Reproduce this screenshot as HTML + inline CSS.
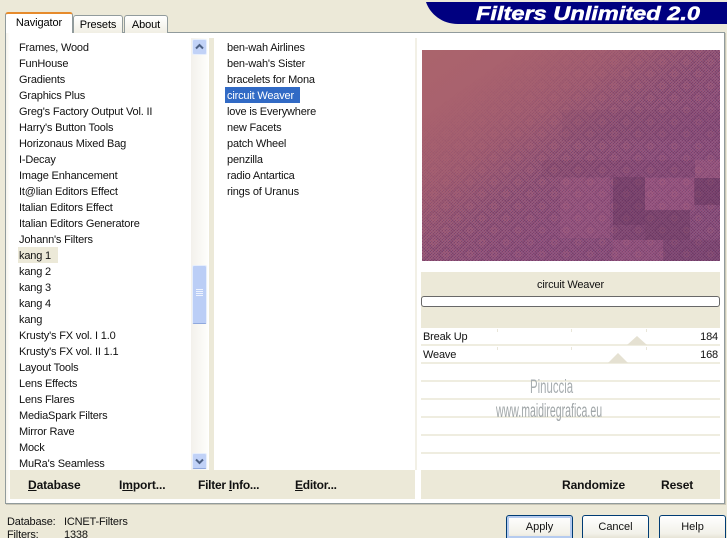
<!DOCTYPE html>
<html style="width:727px;height:538px;overflow:hidden"><head><meta charset="utf-8"><style>
html,body{margin:0;padding:0}
body{width:727px;height:538px;overflow:hidden;background:#ECE9D8;position:relative;font-family:"Liberation Sans",sans-serif;font-size:12px;color:#000}
.a{position:absolute}
.t{position:absolute;white-space:nowrap;line-height:16px;height:16px;font-size:11px;letter-spacing:-.18px;margin-top:1px;color:#111}
.tab{position:absolute;box-sizing:border-box;text-align:center;font-size:11px;letter-spacing:-.1px;border:1px solid #919B9C;border-bottom:none;border-radius:3px 3px 0 0;background:linear-gradient(#fff,#F1EFE4)}
.b{position:absolute;font-weight:bold;font-size:12px;letter-spacing:-.1px;color:#111;white-space:nowrap;line-height:16px}
.btn{position:absolute;top:515px;height:23px;width:67px;box-sizing:border-box;border:1px solid #003C74;border-bottom:none;border-radius:3px 3px 0 0;background:linear-gradient(#fff,#F2F1E9 80%,#E6E3D6);text-align:center;line-height:23px;font-size:11px;color:#111}
.l{position:absolute;left:421px;width:299px;height:2px;background:#EFEDE0}
.tk{position:absolute;width:1px;height:3px;background:#E9E6D9}
</style></head><body>
<!-- logo -->
<svg class="a" style="left:420px;top:0" width="307" height="26"><path d="M6 2H307V24H38C22 24 10 14 6 2Z" fill="#000080"/><text x="56" y="20" font-family="Liberation Sans" font-weight="bold" font-style="italic" font-size="19" fill="#fff" stroke="#fff" stroke-width=".5" textLength="224" lengthAdjust="spacingAndGlyphs">Filters Unlimited 2.0</text></svg>
<!-- panel -->
<div class="a" style="left:5px;top:32px;width:720px;height:472px;box-sizing:border-box;border:1px solid #919B9C;background:#fff;box-shadow:1px 1px 0 #C9C6B6"></div>
<div class="tab" style="left:73px;top:15px;width:50px;height:18px;line-height:18px">Presets</div>
<div class="tab" style="left:124px;top:15px;width:44px;height:18px;line-height:18px">About</div>
<div class="tab" style="left:5px;top:12px;width:68px;height:21px;line-height:18px;border-top:2px solid #E68B2C;border-bottom:none;background:#fff;z-index:2">Navigator</div>
<div class="a" style="left:6px;top:33px;width:4px;height:470px;background:linear-gradient(90deg,#F6F4EC,#fff)"></div>
<!-- left list -->
<div class="a" style="left:18px;top:247px;width:40px;height:16px;background:#ECE9D8"></div>
<div class="t" style="left:19px;top:39px">Frames, Wood</div>
<div class="t" style="left:19px;top:55px">FunHouse</div>
<div class="t" style="left:19px;top:71px">Gradients</div>
<div class="t" style="left:19px;top:87px">Graphics Plus</div>
<div class="t" style="left:19px;top:103px">Greg's Factory Output Vol. II</div>
<div class="t" style="left:19px;top:119px">Harry's Button Tools</div>
<div class="t" style="left:19px;top:135px">Horizonaus Mixed Bag</div>
<div class="t" style="left:19px;top:151px">I-Decay</div>
<div class="t" style="left:19px;top:167px">Image Enhancement</div>
<div class="t" style="left:19px;top:183px">It@lian Editors Effect</div>
<div class="t" style="left:19px;top:199px">Italian Editors Effect</div>
<div class="t" style="left:19px;top:215px">Italian Editors Generatore</div>
<div class="t" style="left:19px;top:231px">Johann's Filters</div>
<div class="t" style="left:19px;top:247px">kang 1</div>
<div class="t" style="left:19px;top:263px">kang 2</div>
<div class="t" style="left:19px;top:279px">kang 3</div>
<div class="t" style="left:19px;top:295px">kang 4</div>
<div class="t" style="left:19px;top:311px">kang</div>
<div class="t" style="left:19px;top:327px">Krusty's FX vol. I 1.0</div>
<div class="t" style="left:19px;top:343px">Krusty's FX vol. II 1.1</div>
<div class="t" style="left:19px;top:359px">Layout Tools</div>
<div class="t" style="left:19px;top:375px">Lens Effects</div>
<div class="t" style="left:19px;top:391px">Lens Flares</div>
<div class="t" style="left:19px;top:407px">MediaSpark Filters</div>
<div class="t" style="left:19px;top:423px">Mirror Rave</div>
<div class="t" style="left:19px;top:439px">Mock</div>
<div class="t" style="left:19px;top:455px">MuRa's Seamless</div>
<!-- scrollbar -->
<div class="a" style="left:191px;top:38px;width:17px;height:432px;background:linear-gradient(90deg,#F3F1EC,#FEFEFB)"></div>
<div class="a" style="left:192px;top:39px;width:15px;height:16px;box-sizing:border-box;background:#C1D2F7;border:1px solid #E6EEFC;border-radius:2px"></div>
<svg class="a" style="left:192px;top:39px" width="15" height="16"><path d="M4 9.5L7.5 6L11 9.5" fill="none" stroke="#4D6185" stroke-width="2"/></svg>
<div class="a" style="left:192px;top:265px;width:15px;height:59px;box-sizing:border-box;background:#BBCEF6;border:1px solid #E6EEFC;border-bottom-color:#8FA8DD;border-radius:2px"></div>
<svg class="a" style="left:192px;top:288px" width="15" height="10"><path d="M4 1.5H11M4 3.5H11M4 5.5H11M4 7.5H11" stroke="#EEF3FE" stroke-width="1"/></svg>
<div class="a" style="left:192px;top:453px;width:15px;height:16px;box-sizing:border-box;background:#C1D2F7;border:1px solid #E6EEFC;border-bottom-color:#8FA8DD;border-radius:2px"></div>
<svg class="a" style="left:192px;top:453px" width="15" height="16"><path d="M4 6.5L7.5 10L11 6.5" fill="none" stroke="#4D6185" stroke-width="2"/></svg>
<div class="a" style="left:209px;top:38px;width:5px;height:432px;background:#ECE9D8"></div>
<!-- middle list -->
<div class="a" style="left:225px;top:87px;width:75px;height:16px;background:#316AC5"></div>
<div class="t" style="left:227px;top:39px">ben-wah Airlines</div>
<div class="t" style="left:227px;top:55px">ben-wah's Sister</div>
<div class="t" style="left:227px;top:71px">bracelets for Mona</div>
<div class="t" style="left:227px;top:87px;color:#fff">circuit Weaver</div>
<div class="t" style="left:227px;top:103px">love is Everywhere</div>
<div class="t" style="left:227px;top:119px">new Facets</div>
<div class="t" style="left:227px;top:135px">patch Wheel</div>
<div class="t" style="left:227px;top:151px">penzilla</div>
<div class="t" style="left:227px;top:167px">radio Antartica</div>
<div class="t" style="left:227px;top:183px">rings of Uranus</div>
<div class="a" style="left:415px;top:38px;width:2px;height:432px;background:#F2F0E6"></div>
<!-- preview -->
<svg class="a" style="left:422px;top:50px" width="298" height="211" viewBox="0 0 298 211">
<defs>
<linearGradient id="g" x1="0" y1="0" x2="1" y2="1"><stop offset="0" stop-color="#AA646C"/><stop offset=".35" stop-color="#A85F70"/><stop offset=".65" stop-color="#9A547C"/><stop offset="1" stop-color="#90507A"/></linearGradient>
<pattern id="w" width="3" height="3" patternUnits="userSpaceOnUse"><path d="M0 3L3 0" stroke="#5A2C5E" stroke-width=".9"/><path d="M0 0L3 3" stroke="#7C6C98" stroke-width=".6"/></pattern>
<pattern id="d" width="17" height="17" patternUnits="userSpaceOnUse" patternTransform="rotate(45)"><rect x="3" y="3" width="11" height="11" fill="none" stroke="#602C5C" stroke-width="1.1"/><circle cx="8.5" cy="8.5" r="2.5" fill="none" stroke="#B46A78" stroke-width="1"/></pattern>
<linearGradient id="mg" x1="0" y1="0" x2="1" y2="1"><stop offset=".16" stop-color="#000"/><stop offset=".32" stop-color="#555"/><stop offset=".5" stop-color="#ddd"/></linearGradient>
<mask id="m"><rect width="298" height="211" fill="url(#mg)"/></mask>
</defs>
<rect width="298" height="211" fill="url(#g)"/>
<g mask="url(#m)"><rect width="298" height="211" fill="url(#w)" opacity=".62"/><rect width="298" height="211" fill="url(#d)" opacity=".32"/></g>
<rect x="140" y="60" width="158" height="30" fill="#6E3A62" opacity=".1"/>
<rect x="138" y="128" width="50" height="60" fill="#C06C8E" opacity=".14"/>
<rect x="191" y="127" width="32" height="48" fill="#54294F" opacity=".3"/>
<rect x="223" y="160" width="45" height="30" fill="#54294F" opacity=".26"/>
<rect x="191" y="175" width="32" height="15" fill="#54294F" opacity=".16"/>
<rect x="223" y="128" width="50" height="32" fill="#C06C8E" opacity=".18"/>
<rect x="272" y="128" width="26" height="27" fill="#54294F" opacity=".3"/>
<rect x="273" y="110" width="25" height="18" fill="#C06C8E" opacity=".2"/>
<rect x="191" y="190" width="50" height="21" fill="#C06C8E" opacity=".14"/>
<rect x="241" y="190" width="57" height="21" fill="#54294F" opacity=".16"/>
<rect x="120" y="110" width="153" height="17" fill="#54294F" opacity=".08"/>
</svg>
<!-- effect area -->
<div class="a" style="left:421px;top:272px;width:299px;height:56px;background:#ECE9D8"></div>
<div class="a" style="left:421px;top:277px;width:299px;text-align:center;font-size:11px;letter-spacing:-.18px;line-height:16px;margin-top:0;color:#111">circuit Weaver</div>
<div class="a" style="left:421px;top:296px;width:299px;height:11px;box-sizing:border-box;border:1px solid #686868;border-radius:3px;background:#fff"></div>
<div class="t" style="left:423px;top:328px">Break Up</div><div class="t" style="right:9px;top:328px">184</div>
<div class="t" style="left:423px;top:346px">Weave</div><div class="t" style="right:9px;top:346px">168</div>
<div class="tk" style="left:497px;top:329px"></div><div class="tk" style="left:571px;top:329px"></div><div class="tk" style="left:646px;top:329px"></div>
<div class="tk" style="left:497px;top:347px"></div><div class="tk" style="left:571px;top:347px"></div><div class="tk" style="left:646px;top:347px"></div>
<div class="l" style="top:344px"></div><div class="l" style="top:362px"></div><div class="l" style="top:380px"></div><div class="l" style="top:398px"></div><div class="l" style="top:416px"></div><div class="l" style="top:434px"></div><div class="l" style="top:452px"></div>
<svg class="a" style="left:600px;top:334px" width="60" height="32"><path d="M27 11L37 2L47 11Z" fill="#E5E1D2"/><path d="M8 29L18 19L28 29Z" fill="#E5E1D2"/></svg>
<!-- watermark -->
<div class="a" style="left:530px;top:378px;font-size:19px;line-height:20px;color:#A7ADB0;white-space:nowrap;transform-origin:0 0;transform:scaleX(.6)">Pinuccia</div>
<div class="a" style="left:496px;top:402px;font-size:19px;line-height:20px;color:#A0A6A8;white-space:nowrap;transform-origin:0 0;transform:scaleX(.555)">www.maidiregrafica.eu</div>
<!-- bottom bars -->
<div class="a" style="left:10px;top:470px;width:405px;height:29px;background:#ECE9D8"></div>
<div class="a" style="left:421px;top:470px;width:299px;height:29px;background:#ECE9D8"></div>
<div class="b" style="left:28px;top:477px"><u>D</u>atabase</div>
<div class="b" style="left:119px;top:477px">I<u>m</u>port...</div>
<div class="b" style="left:198px;top:477px;letter-spacing:-.25px">Filter <u>I</u>nfo...</div>
<div class="b" style="left:295px;top:477px;letter-spacing:-.25px"><u>E</u>ditor...</div>
<div class="b" style="left:562px;top:477px">Randomize</div>
<div class="b" style="left:661px;top:477px">Reset</div>
<!-- status -->
<div class="t" style="left:7px;top:513px">Database:</div>
<div class="t" style="left:64px;top:513px">ICNET-Filters</div>
<div class="t" style="left:7px;top:526px">Filters:</div>
<div class="t" style="left:64px;top:526px">1338</div>
<div class="btn" style="left:506px;box-shadow:inset 0 0 0 2px #B5CBEF">Apply</div>
<div class="btn" style="left:582px">Cancel</div>
<div class="btn" style="left:659px">Help</div>
</body></html>
